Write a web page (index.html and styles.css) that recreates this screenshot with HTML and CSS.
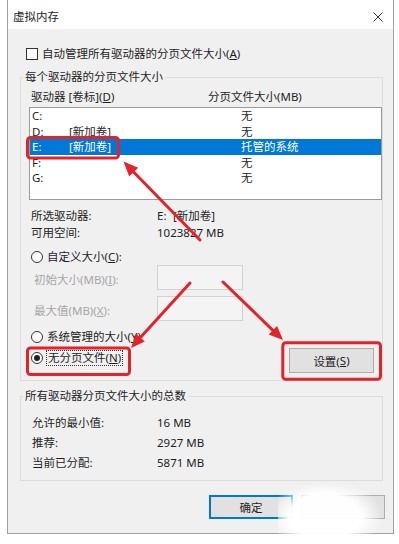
FILE: index.html
```html
<!DOCTYPE html>
<html lang="zh-CN">
<head>
<meta charset="utf-8">
<title>虚拟内存</title>
<link rel="stylesheet" href="styles.css">
</head>
<body>
<div class="window">
  <div class="titlebar">
    <span class="title">虚拟内存</span>
    <svg class="close" width="10" height="10" viewBox="0 0 10 10"><path d="M0.5 0.5 L9.5 9.5 M9.5 0.5 L0.5 9.5" stroke="#333" stroke-width="1" fill="none"/></svg>
  </div>
  <div class="content">
    <div class="check-row"><span class="checkbox"></span><span>自动管理所有驱动器的分页文件大小(<u>A</u>)</span></div>

    <fieldset class="group g1">
      <legend>每个驱动器的分页文件大小</legend>
      <div class="g-body">
        <div class="list-head"><span class="h1">驱动器 [卷标](<u>D</u>)</span><span>分页文件大小(MB)</span></div>
        <div class="list">
          <div class="row"><span class="d">C:</span><span class="l"></span><span>无</span></div>
          <div class="row"><span class="d">D:</span><span class="l">[新加卷]</span><span>无</span></div>
          <div class="row sel"><span class="d">E:</span><span class="l">[新加卷]</span><span>托管的系统</span></div>
          <div class="row"><span class="d">F:</span><span class="l"></span><span>无</span></div>
          <div class="row"><span class="d">G:</span><span class="l"></span><span>无</span></div>
        </div>
        <div class="info">
          <span>所选驱动器:</span><span><span class="drv">E:</span>[新加卷]</span>
          <span>可用空间:</span><span>1023827 MB</span>
        </div>
        <div class="radio-row r-custom"><span class="radio"></span><span>自定义大小(<u>C</u>):</span></div>
        <div class="field-row"><span class="flabel">初始大小(MB)(<u>I</u>):</span><span class="input"></span></div>
        <div class="field-row"><span class="flabel">最大值(MB)(<u>X</u>):</span><span class="input"></span></div>
        <div class="bottom-row">
          <div class="radios">
            <div class="radio-row"><span class="radio"></span><span>系统管理的大小(<u>Y</u>)</span></div>
            <div class="radio-row"><span class="radio on"></span><span class="focus">无分页文件(<u>N</u>)</span></div>
          </div>
          <button class="btn set">设置(<u>S</u>)</button>
        </div>
      </div>
    </fieldset>

    <fieldset class="group g2">
      <legend>所有驱动器分页文件大小的总数</legend>
      <div class="g-body">
        <span>允许的最小值:</span><span>16 MB</span>
        <span>推荐:</span><span>2927 MB</span>
        <span>当前已分配:</span><span>5871 MB</span>
      </div>
    </fieldset>

    <div class="buttons">
      <button class="btn ok">确定</button>
      <button class="btn cancel"></button>
    </div>
  </div>
</div>

<svg class="annot" width="399" height="544" viewBox="0 0 399 544">
  <g fill="none" stroke="#e3232a" stroke-width="3">
    <rect x="27.5" y="137.5" width="91" height="20.5" rx="3"/>
    <rect x="27.5" y="348" width="102" height="26.5" rx="3"/>
    <rect x="282.8" y="342.8" width="97.7" height="36.5" rx="3"/>
  </g>
  <g stroke="#e3232a" stroke-width="3" stroke-linecap="round">
    <line x1="200" y1="240" x2="133.6" y2="172"/>
    <line x1="190" y1="283" x2="140.4" y2="337.6"/>
    <line x1="223" y1="282" x2="272.9" y2="330.3"/>
  </g>
  <g fill="#e3232a">
    <polygon points="123.5,161.5 138.2,167.8 129.2,176.5"/>
    <polygon points="131,348 144.8,341.6 136,333.6"/>
    <polygon points="283,340 268.7,334.6 277.1,326"/>
  </g>
</svg>
<div class="watermark"></div>
</body>
</html>
```

FILE: styles.css
```css
* { box-sizing: border-box; }
html, body { margin: 0; padding: 0; }
body {
  width: 399px;
  height: 544px;
  background: #fff;
  font-family: "Noto Sans", "Noto Sans CJK SC", sans-serif;
  font-size: 11.5px;
  color: #1e1e1e;
  position: relative;
  overflow: hidden;
}
u { text-decoration: underline; text-underline-offset: 1px; }

.window {
  margin-left: 7px;
  width: 387px;
  height: 534px;
  border: 1px solid #a0a0a0;
  border-top: none;
  background: #f0f0f0;
}
.titlebar {
  height: 29px;
  background: #fff;
  display: flex;
  align-items: center;
  justify-content: space-between;
  padding: 4px 10px 0 5px;
}
.title { line-height: 16px; }
.close { display: block; }

.content { padding: 17px 10px 0 12px; }

.check-row {
  display: flex;
  align-items: center;
  gap: 4px;
  margin-left: 6px;
  height: 16px;
  line-height: 16px;
}
.checkbox {
  width: 12px;
  height: 12px;
  border: 1px solid #333;
  background: #fff;
}

.group {
  margin: 7px 0 0;
  padding: 0;
  border: 1px solid #dcdcdc;
  min-width: 0;
}
.group legend {
  margin-left: 2px;
  padding: 0 2px;
  line-height: 16px;
}
.g1 .g-body { padding: 4px 0 7px 8px; }

.list-head {
  display: flex;
  line-height: 16px;
  padding-left: 2px;
}
.list-head .h1 { width: 177px; }

.list {
  margin-top: 2px;
  height: 93px;
  background: #fff;
  border: 1px solid #9c9c9c;
}
.row {
  display: flex;
  height: 15.5px;
  line-height: 15.5px;
  padding-left: 2px;
}
.row .d { width: 37px; }
.row .l { width: 172px; }
.row.sel { background: #0078d7; color: #fff; }

.info {
  margin-top: 6.5px;
  display: grid;
  grid-template-columns: 126px auto;
  line-height: 17px;
  padding-left: 2px;
}
.drv { display: inline-block; width: 16px; }

.radio-row {
  display: flex;
  align-items: center;
  gap: 4px;
  height: 16px;
  line-height: 16px;
  margin-left: 2px;
}
.radio {
  width: 12px;
  height: 12px;
  border: 1px solid #333;
  border-radius: 50%;
  background: #fff;
  display: flex;
  align-items: center;
  justify-content: center;
  flex: none;
}
.radio.on::after {
  content: "";
  width: 6px;
  height: 6px;
  border-radius: 50%;
  background: #222;
}
.r-custom { margin-top: 8.5px; }

.field-row {
  display: flex;
  align-items: center;
  height: 25px;
}
.field-row + .field-row { margin-top: 5.5px; }
.flabel {
  width: 128px;
  padding-left: 5px;
  padding-top: 3px;
  color: #a6a6a6;
}
.input {
  width: 86px;
  height: 25px;
  border: 1px solid #d2d2d2;
  background: #f4f4f4;
}

.bottom-row {
  margin-top: 8.5px;
  display: flex;
  justify-content: space-between;
  align-items: flex-start;
}
.radios {
  display: flex;
  flex-direction: column;
  gap: 5px;
}
.focus {
  outline: 1px dotted #333;
  line-height: 14px;
  padding: 0 1px;
}

.btn {
  font: inherit;
  color: inherit;
  padding: 0;
  margin: 0;
  width: 85px;
  height: 25px;
  border: 1px solid #adadad;
  background: #e1e1e1;
  display: flex;
  align-items: center;
  justify-content: center;
}
.set { margin-top: 19px; margin-right: 8px; }

.g2 .g-body {
  padding: 9px 0 7px 11px;
  display: grid;
  grid-template-columns: 125px auto;
  line-height: 20px;
}

.buttons {
  display: flex;
  justify-content: flex-end;
  gap: 8px;
  margin-top: 14px;
  margin-right: -2px;
}
.btn.ok {
  width: 84px;
  height: 24px;
  border-color: #0078d7;
  box-shadow: inset 0 0 0 1px #0078d7;
}
.btn.cancel { width: 84px; height: 24px; }

.annot {
  position: absolute;
  left: 0;
  top: 0;
  pointer-events: none;
}
.watermark {
  position: absolute;
  left: 278px;
  top: 482px;
  width: 104px;
  height: 62px;
  background: radial-gradient(ellipse at 45% 55%, rgba(255,255,255,0.98) 45%, rgba(255,255,255,0) 72%);
  pointer-events: none;
}
```
